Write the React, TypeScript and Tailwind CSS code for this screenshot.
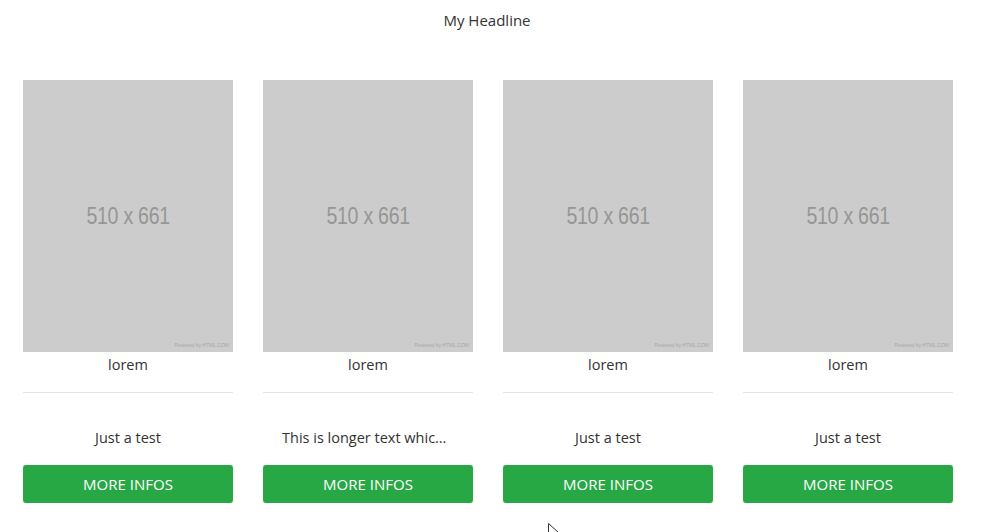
import React from 'react'

const CARDS = [
  { title: 'lorem', text: 'Just a test' },
  { title: 'lorem', text: 'This is longer text which should be cut off at the end' },
  { title: 'lorem', text: 'Just a test' },
  { title: 'lorem', text: 'Just a test' },
]

function Placeholder() {
  return (
    <div className="relative w-full h-[272px] bg-[#cccccc] flex items-center justify-center">
      <span className="text-[23px] text-[#969696] scale-x-[0.85] tracking-[-0.3px]" style={{ fontFamily: '"Liberation Sans", Arial, sans-serif' }}>510 x 661</span>
      <span className="absolute right-[4px] bottom-[3px] text-[5px] text-[#a8a8a8]" style={{ fontFamily: '"Liberation Sans", Arial, sans-serif' }}>Powered by HTML.COM</span>
    </div>
  )
}

export default function App() {
  return (
    <div className="relative w-[982px] h-[532px] bg-white text-[#333333] overflow-hidden" style={{ fontFamily: '"Open Sans", "Noto Sans", sans-serif' }}>
      <h1 className="pt-[10px] text-center text-[15px] leading-[20px] mr-[8px]">My Headline</h1>
      <div className="flex gap-[30px] pl-[23px] mt-[50px]">
        {CARDS.map((c, i) => (
          <div key={i} className="w-[210px] flex flex-col">
            <Placeholder />
            <div className="text-center text-[14.5px] leading-[24px] mt-[1px]">{c.title}</div>
            <div className="border-t border-[#e5e5e5] mt-[15px]" />
            <div className="text-center text-[14.5px] leading-[20px] mt-[35px] px-[19px] truncate">{c.text}</div>
            <button className="mt-[17px] h-[38px] w-full rounded-[3px] bg-[#28a745] text-white text-[15px]">MORE INFOS</button>
          </div>
        ))}
      </div>
      <svg className="absolute left-[548px] top-[523px]" width="12" height="18" viewBox="0 0 12 18">
        <path d="M0.5 0.5 L0.5 14 L4 10.5 L6.5 16 L8.5 15 L6 9.5 L10.5 9.5 Z" fill="white" stroke="#333" strokeWidth="1" />
      </svg>
    </div>
  )
}
